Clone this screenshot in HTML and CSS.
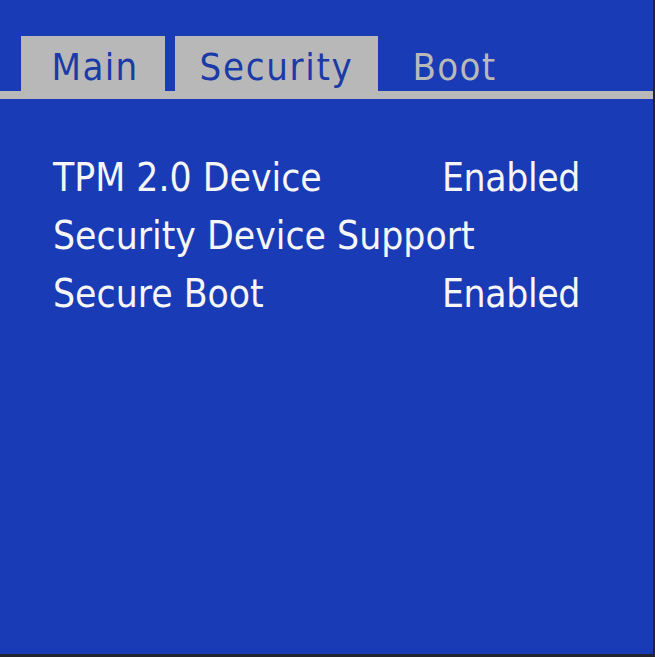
FILE: index.html
```html
<!DOCTYPE html>
<html lang="en">
<head>
<meta charset="utf-8">
<title>BIOS Security</title>
<link rel="stylesheet" href="styles.css">
</head>
<body>
<div class="screen">
  <nav class="tabs">
    <div class="tab tab-main">Main</div>
    <div class="tab tab-security">Security</div>
    <div class="tab tab-boot">Boot</div>
  </nav>
  <div class="bar"></div>
  <div class="items">
    <div class="row"><span class="label">TPM 2.0 Device</span><span class="value">Enabled</span></div>
    <div class="row"><span class="label">Security Device Support</span><span class="value"></span></div>
    <div class="row"><span class="label">Secure Boot</span><span class="value">Enabled</span></div>
  </div>
</div>
</body>
</html>
```
FILE: styles.css
```css
html, body {
  margin: 0;
  padding: 0;
}
body {
  width: 655px;
  height: 657px;
  background: #22252e;
  overflow: hidden;
}
.screen {
  width: 653px;
  height: 654px;
  background: #1a3bb6;
  font-family: "DejaVu Sans Condensed", "DejaVu Sans", sans-serif;
  font-stretch: condensed;
  padding-top: 36px;
  box-sizing: border-box;
}
.tabs {
  display: flex;
  gap: 10px;
  padding-left: 21px;
  height: 55px;
}
.tab {
  box-sizing: border-box;
  height: 55px;
  padding-top: 8px;
  line-height: 47px;
  font-size: 38px;
  letter-spacing: 1.3px;
  text-align: center;
}
.tab-main {
  width: 144px;
  padding-left: 4px;
  background: #b8b8b8;
  color: #1b3aa8;
}
.tab-security {
  width: 203px;
  background: #b8b8b8;
  color: #1b3aa8;
  letter-spacing: 1.7px;
}
.tab-boot {
  width: 133px;
  color: #b9b9b9;
}
.bar {
  height: 8px;
  background: #b9b9b9;
}
.items {
  padding-top: 50px;
  padding-left: 53px;
  color: #f6f6f6;
  font-size: 38.7px;
}
.row {
  display: flex;
  height: 58px;
  line-height: 58px;
  white-space: nowrap;
}
.label {
  width: 389px;
}
.value {
  letter-spacing: -0.4px;
}
```
